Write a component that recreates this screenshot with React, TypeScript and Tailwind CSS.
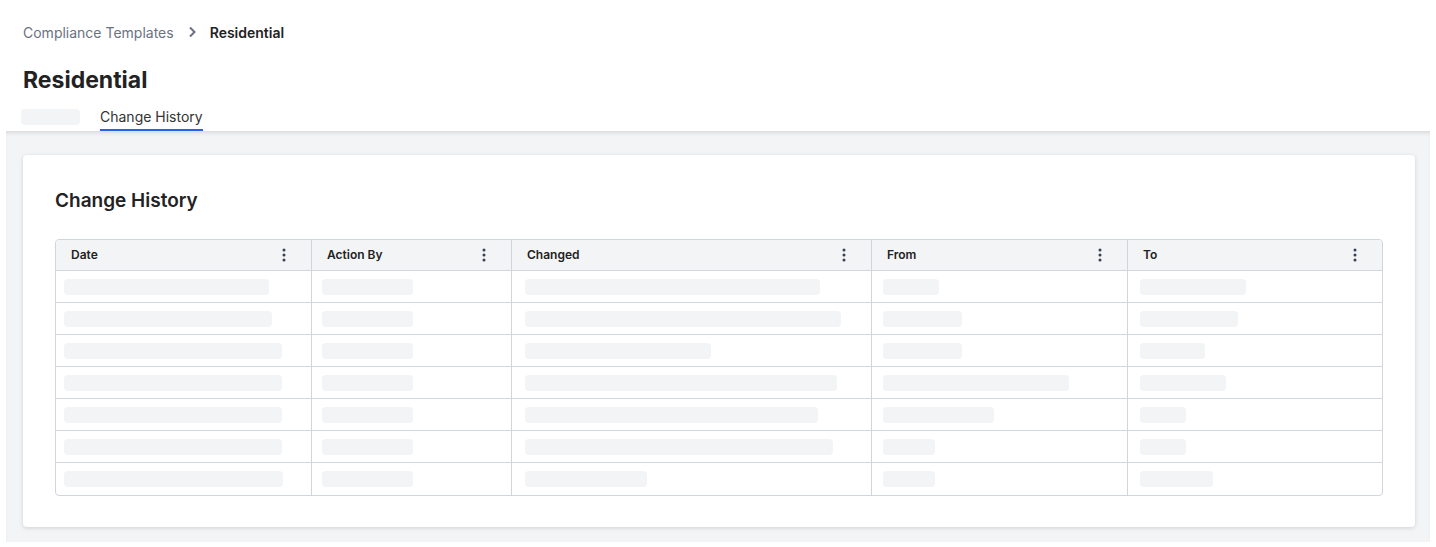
const cols = [
  { name: "Date", w: "w-[255px]", pl: "pl-2", bars: [205, 208, 218, 218, 218, 218, 219] },
  { name: "Action By", w: "w-[200px]", pl: "pl-[11px]", bars: [91, 91, 91, 91, 91, 91, 91] },
  { name: "Changed", w: "w-[360px]", pl: "pl-[14px]", bars: [295, 316, 186, 312, 293, 308, 122] },
  { name: "From", w: "w-[256px]", pl: "pl-3", bars: [56, 79, 79, 186, 111, 52, 52] },
  { name: "To", w: "flex-1", pl: "pl-[13px]", bars: [106, 98, 65, 86, 46, 46, 73] },
];

function Dots() {
  return (
    <svg width="4" height="14" viewBox="0 0 4 14" className="text-gray-700">
      <circle cx="2" cy="2" r="1.5" fill="currentColor" />
      <circle cx="2" cy="7" r="1.5" fill="currentColor" />
      <circle cx="2" cy="12" r="1.5" fill="currentColor" />
    </svg>
  );
}

export default function App() {
  return (
    <div className="w-[1436px] h-[547px] bg-white font-[Inter] text-[#222]">
      <div className="px-[23px] pt-[23px]">
        <div className="flex items-center text-[14px] h-[18px]">
          <span className="text-gray-500">Compliance Templates</span>
          <svg width="8" height="12" viewBox="0 0 8 12" className="mx-[14px] text-gray-500">
            <path d="M2 1.5 6.5 6 2 10.5" stroke="currentColor" strokeWidth="2" fill="none" />
          </svg>
          <span className="font-semibold text-[#222]">Residential</span>
        </div>
        <h1 className="mt-[24px] text-[23px] font-bold leading-[30px]">Residential</h1>
        <div className="mt-[10px] flex items-end h-[26px]">
          <div className="w-[59px] h-[16px] rounded bg-gray-100 mb-[6px] -ml-[2px]"></div>
          <div className="ml-[20px] text-[14px] text-[#333] border-b-2 border-[#2563eb] pb-[3px] leading-[18px]">
            Change History
          </div>
        </div>
      </div>
      <div className="mx-[6px] h-[411px] bg-[#f3f4f6] shadow-[inset_0_4px_5px_-3px_rgba(0,0,0,0.15)] pl-[17px] pr-[15px] pt-[24px]">
        <div className="bg-white rounded shadow-[0_1px_4px_rgba(0,0,0,0.15)] h-[372px] px-[32px] pt-[33px]">
          <h2 className="text-[19px] font-semibold leading-[26px]">Change History</h2>
          <div className="mt-[25px] border border-gray-300 rounded flex overflow-hidden">
            {cols.map((c, i) => (
              <div key={c.name} className={`${c.w} flex flex-col ${i > 0 ? "border-l border-gray-300" : ""}`}>
                <div className="h-[31px] bg-[#f3f4f6] border-b border-gray-300 flex items-center justify-between pl-[15px] pr-[25px] text-[12px] font-semibold">
                  {c.name}
                  <Dots />
                </div>
                {c.bars.map((b, j) => (
                  <div
                    key={j}
                    className={`h-[32px] flex items-center ${c.pl} ${j < 6 ? "border-b border-gray-300" : ""} ${i > 0 ? "-ml-px" : ""}`}
                  >
                    <div className="h-[16px] rounded bg-[#f3f4f6]" style={{ width: b }}></div>
                  </div>
                ))}
              </div>
            ))}
          </div>
        </div>
      </div>
    </div>
  );
}
